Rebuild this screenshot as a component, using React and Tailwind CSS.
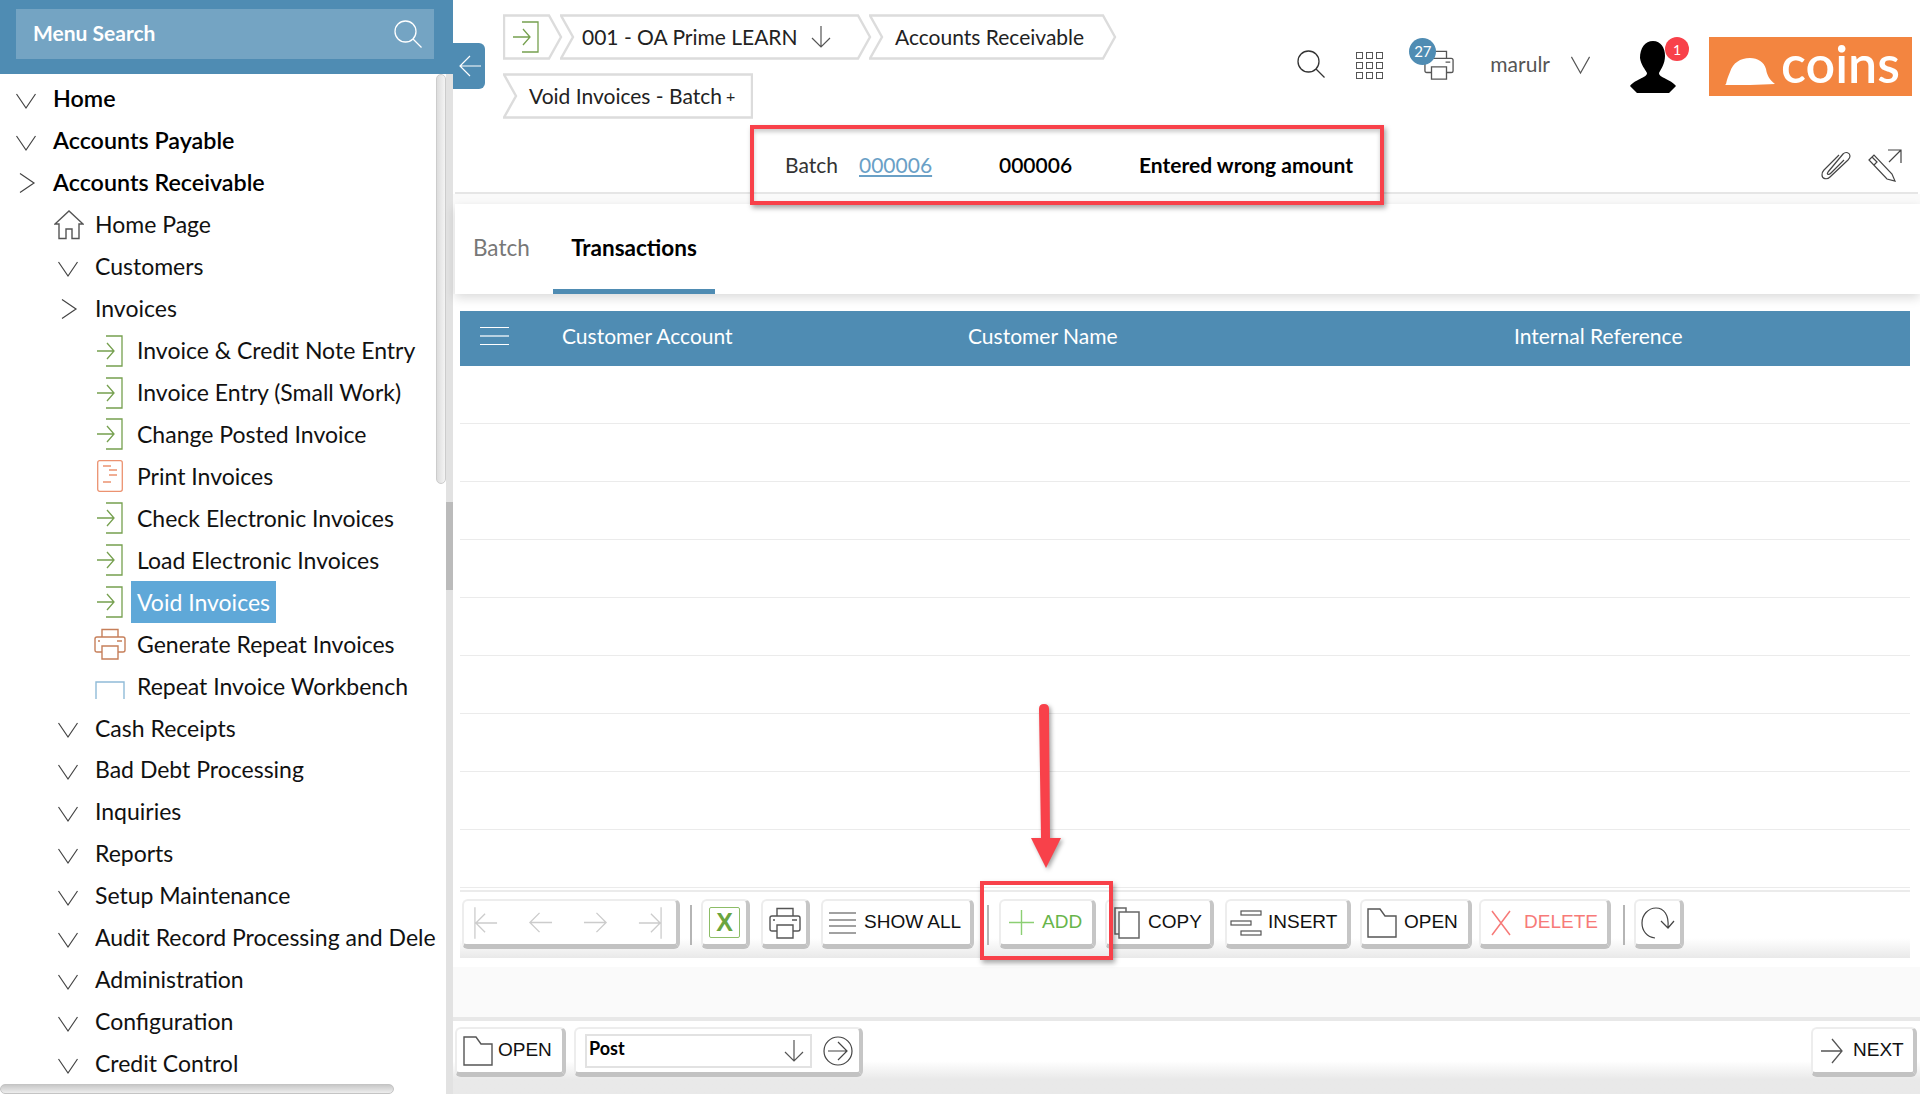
const Chevron = ({ open = true, className = "" }) => (
  <svg viewBox="0 0 22 22" className={`w-[22px] h-[22px] shrink-0 ${className}`} fill="none" stroke="#444" strokeWidth="1.2">
    {open ? <path d="M1.5 6 L11 20 L20.5 6" /> : <path d="M5 1.5 L19 11 L5 20.5" />}
  </svg>
);

const EnterIcon = ({ className = "" }) => (
  <svg viewBox="0 0 28 32" className={`w-[28px] h-[32px] shrink-0 ${className}`} fill="none" stroke="#76a04f" strokeWidth="1.3">
    <path d="M10 1 H26 V31 H10" />
    <path d="M1 16 H18 M11 8 L18 16 L11 24" />
  </svg>
);

const SearchIcon = ({ color = "#333", className = "" }) => (
  <svg viewBox="0 0 28 28" className={className} fill="none" stroke={color} strokeWidth="1.3">
    <circle cx="11.5" cy="11.5" r="10.5" />
    <path d="M19 19 L27.5 27.5" />
  </svg>
);

const PrinterIcon = ({ color = "#444", className = "" }) => (
  <svg viewBox="0 0 32 32" className={className} fill="none" stroke={color} strokeWidth="1.4">
    <path d="M8 9 V1.5 H24 V9" />
    <path d="M8 24 H3 Q1 24 1 22 V11 Q1 9 3 9 H29 Q31 9 31 11 V22 Q31 24 29 24 H24" />
    <path d="M8 18 H24 V31 H8 Z" />
    <path d="M4 13 H6 M23 13 H28" />
  </svg>
);

const FolderIcon = () => (
  <svg viewBox="0 0 30 30" className="w-[30px] h-[30px] shrink-0" fill="none" stroke="#555" strokeWidth="1.4">
    <path d="M1 1 H13 L18 8 H29 V29 H1 Z" />
  </svg>
);

const sideItems = [
  { label: "Home", level: 0, open: true },
  { label: "Accounts Payable", level: 0, open: true },
  { label: "Accounts Receivable", level: 0, open: false },
  { label: "Home Page", level: 1, icon: "house" },
  { label: "Customers", level: 1, open: true },
  { label: "Invoices", level: 1, open: false },
  { label: "Invoice & Credit Note Entry", level: 2, icon: "enter" },
  { label: "Invoice Entry (Small Work)", level: 2, icon: "enter" },
  { label: "Change Posted Invoice", level: 2, icon: "enter" },
  { label: "Print Invoices", level: 2, icon: "doc" },
  { label: "Check Electronic Invoices", level: 2, icon: "enter" },
  { label: "Load Electronic Invoices", level: 2, icon: "enter" },
  { label: "Void Invoices", level: 2, icon: "enter", active: true },
  { label: "Generate Repeat Invoices", level: 2, icon: "print" },
  { label: "Repeat Invoice Workbench", level: 2, icon: "window" },
  { label: "Cash Receipts", level: 1, open: true },
  { label: "Bad Debt Processing", level: 1, open: true },
  { label: "Inquiries", level: 1, open: true },
  { label: "Reports", level: 1, open: true },
  { label: "Setup Maintenance", level: 1, open: true },
  { label: "Audit Record Processing and Dele", level: 1, open: true },
  { label: "Administration", level: 1, open: true },
  { label: "Configuration", level: 1, open: true },
  { label: "Credit Control", level: 1, open: true },
];

const SideIcon = ({ item }) => {
  if (item.icon === "house")
    return (
      <svg viewBox="0 0 30 30" className="w-[30px] h-[30px] shrink-0" fill="none" stroke="#555" strokeWidth="1.4">
        <path d="M1 14 L15 1 L29 14 H25 V28.5 H18 V19 H12 V28.5 H5 V14 Z" />
      </svg>
    );
  if (item.icon === "enter") return <EnterIcon />;
  if (item.icon === "doc")
    return (
      <svg viewBox="0 0 26 32" className="w-[26px] h-[32px] shrink-0" fill="none" stroke="#ec9270" strokeWidth="1.3">
        <rect x="0.7" y="0.7" width="24.6" height="30.6" rx="2" />
        <path d="M6 6 H14 M12 10 H20 M12 15 H20 M6 22 H14" />
      </svg>
    );
  if (item.icon === "print") return <PrinterIcon color="#c67f5a" className="w-[32px] h-[32px] shrink-0" />;
  return (
    <svg viewBox="0 0 30 18" className="w-[30px] h-[18px] shrink-0 mt-[8px]" fill="none" stroke="#90bbd8" strokeWidth="1.4">
      <path d="M1 18 V1 H29 V18" />
    </svg>
  );
};

const SideRow = ({ item }) => {
  if (item.level === 0)
    return (
      <div className="h-[41.95px] pl-[15px] flex items-center gap-[16px] text-black text-[23.3px] font-semibold whitespace-nowrap">
        <Chevron open={item.open} />
        <span>{item.label}</span>
      </div>
    );
  if (item.level === 1)
    return (
      <div className="h-[41.95px] pl-[53px] flex items-center whitespace-nowrap text-[#111]">
        <div className="w-[42px] shrink-0 flex pl-[4px]">
          {item.icon ? <div className="-ml-[3px]"><SideIcon item={item} /></div> : <Chevron open={item.open} />}
        </div>
        <span>{item.label}</span>
      </div>
    );
  return (
    <div className="h-[41.95px] pl-[94px] flex items-center whitespace-nowrap text-[#111]">
      <div className="w-[37px] shrink-0 flex justify-center pr-[5px]">
        <SideIcon item={item} />
      </div>
      <span className={item.active ? "bg-[#5fa8d8] text-white h-[42px] px-[6px] flex items-center" : "px-[6px]"}>
        {item.label}
      </span>
    </div>
  );
};

const Sidebar = () => (
  <aside className="w-[453px] shrink-0 h-full flex flex-col relative">
    <div className="h-[74px] bg-[#4f8cb3] pt-[9px] pl-[16px] pr-[19px] shrink-0">
      <div className="h-[50px] bg-[#74a4c3] flex items-center justify-between pl-[17px] pr-[12px] text-white font-bold text-[21px]">
        <span className="pb-[2px]">Menu Search</span>
        <SearchIcon color="#fff" className="w-[28px] h-[28px]" />
      </div>
    </div>
    <div className="flex-1 flex min-h-0">
      <div className="w-[436px] pt-[4px] overflow-hidden text-[23px] leading-none">
        {sideItems.map((item) => (
          <SideRow key={item.label} item={item} />
        ))}
      </div>
      <div className="w-[10px] pb-[610px]">
        <div className="h-full rounded-full border border-[#ccc] bg-gradient-to-r from-[#ddd] to-[#f4f4f4]"></div>
      </div>
      <div className="w-[7px] bg-[#e2e2e2] pt-[428px]">
        <div className="h-[88px] bg-[#bbb]"></div>
      </div>
    </div>
    <div className="absolute left-0 bottom-0 w-[394px] h-[10px] rounded-full border border-[#c4c4c4] bg-gradient-to-b from-[#c8c8c8] to-[#eee]"></div>
    <div className="absolute left-[453px] top-[43px] w-[32px] h-[46px] bg-[#4f8cb3] rounded-r-md flex items-center pl-[6px] z-10">
      <svg viewBox="0 0 22 22" className="w-[22px] h-[22px]" fill="none" stroke="#fff" strokeWidth="1.2">
        <path d="M22 11 H1 M11 1 L1 11 L11 21" />
      </svg>
    </div>
  </aside>
);

const Crumb = ({ width, first, last, className = "", children }) => (
  <div className={`relative h-[46px] flex items-center ${className}`} style={{ width }}>
    <svg className="absolute inset-0 w-full h-full" viewBox={`0 0 ${width} 46`} fill="none" stroke="#dcdcdc" strokeWidth="2.4">
      <path
        d={
          `M1 1.5 ` +
          (last ? `H${width - 1} V44.5 H1 ` : `H${width - 14} L${width - 2} 23 L${width - 14} 44.5 H1 `) +
          (first ? "Z" : "L13 23 Z")
        }
      />
    </svg>
    <div className="relative flex items-center whitespace-nowrap">{children}</div>
  </div>
);

const TopBar = () => (
  <div className="h-[125px] flex shrink-0">
    <div className="pl-[50px] pt-[14px] w-[700px] text-[21px] text-[#222]">
      <div className="flex">
        <Crumb width={60} first className="pl-[9px]">
          <EnterIcon />
        </Crumb>
        <Crumb width={312} className="-ml-[3px] pl-[22px]">
          <span>001 - OA Prime LEARN</span>
          <svg viewBox="0 0 20 22" className="w-[20px] h-[22px] ml-[13px]" fill="none" stroke="#555" strokeWidth="1.2">
            <path d="M10 0 V21 M1 12 L10 21 L19 12" />
          </svg>
        </Crumb>
        <Crumb width={248} className="-ml-[3px] pl-[26px]">
          Accounts Receivable
        </Crumb>
      </div>
      <Crumb width={250} last className="mt-[13px] pl-[26px]">
        Void Invoices - Batch
        <span className="text-[16px] ml-[4px]">+</span>
      </Crumb>
    </div>
    <div className="flex-1 relative pt-[37px] pr-[8px] flex justify-end">
      <div className="flex items-start">
        <SearchIcon className="w-[28px] h-[28px] mt-[13px]" />
        <div className="grid grid-cols-3 gap-[3px] ml-[31px] mt-[15px]">
          {[0, 1, 2, 3, 4, 5, 6, 7, 8].map((n) => (
            <div key={n} className="w-[7px] h-[7px] border border-[#555]"></div>
          ))}
        </div>
        <div className="relative ml-[41px] mt-[13px]">
          <PrinterIcon color="#555" className="w-[30px] h-[30px]" />
          <div className="absolute -left-[15px] -top-[12px] w-[27px] h-[27px] rounded-full bg-[#4f8cb3] text-white text-[15px] flex items-center justify-center">
            27
          </div>
        </div>
        <span className="ml-[36px] mt-[14px] text-[21px] text-[#555] leading-[26px]">marulr</span>
        <svg viewBox="0 0 22 22" className="w-[21px] h-[21px] ml-[20px] mt-[17px]" fill="none" stroke="#555" strokeWidth="1.2">
          <path d="M1.5 3 L11 20 L20.5 3" />
        </svg>
        <div className="relative ml-[39px] mt-[4px] w-[46px] h-[52px]">
          <svg viewBox="0 0 46 52" className="w-[46px] h-[52px]" fill="#000">
            <path d="M23 0 C31 0 35 7 35 15 C35 23 31 28 29 32 C29 37 41 38 46 45 L39 52 H7 L0 45 C5 38 17 37 17 32 C15 28 11 24 10 17 C10 7 15 0 23 0 Z" />
          </svg>
          <div className="absolute left-[35px] -top-[4px] w-[24px] h-[24px] rounded-full bg-[#f8414a] text-white text-[14px] flex items-center justify-center">
            1
          </div>
        </div>
        <div className="w-[203px] h-[59px] bg-[#f38540] ml-[33px] flex items-center pl-[16px] text-white">
          <svg viewBox="0 0 50 28" className="w-[50px] h-[28px] mt-[8px] shrink-0" fill="#fff">
            <path d="M1 27 C2 22 3 20 5 15 C8 6 15 1 25 1 C33 1 39 5 41 12 C42 18 44 22 50 27 C35 28 15 28 0 28 Z" />
          </svg>
          <span className="ml-[6px] pb-[7px] text-[52px] leading-none font-semibold">coins</span>
        </div>
      </div>
    </div>
  </div>
);

const InfoRow = () => (
  <div className="h-[69px] mx-[2px] border-b-[2px] border-[#e6e6e6] shrink-0 flex items-center pl-[330px] pr-[16px] pt-[13px] text-[21px] text-[#111]">
    <span className="w-[74px] text-[#333]">Batch</span>
    <a className="w-[140px] text-[#6aa0c6] underline">000006</a>
    <span className="w-[140px] font-semibold text-black">000006</span>
    <span className="font-bold text-black">Entered wrong amount</span>
    <div className="ml-auto flex items-center gap-[16px]">
      <svg viewBox="0 0 32 30" className="w-[32px] h-[30px]" fill="none" stroke="#444" strokeWidth="1.2">
        <path d="M8 22 L23 4 C26 1 30 3 30 6 C30 8 29 9 28 10 L10 27 C7 30 2 29 2 25 C2 23 3 21 4 20 L19 5 M8 22 C6 25 9 25 11 23 L24 10" />
      </svg>
      <svg viewBox="0 0 34 34" className="w-[34px] h-[34px]" fill="none" stroke="#444" strokeWidth="1.2">
        <path d="M20 2 H33 V15 M33 2 L21 14" />
        <path d="M1 12 L6 7 L24 26 L27 33 L19 31 Z M4 9 L9 14 L6 17" />
      </svg>
    </div>
  </div>
);

const Tabs = () => (
  <div className="relative z-[1] h-[90px] mt-[10px] ml-[2px] bg-white shadow-[0_4px_10px_rgba(0,0,0,0.14)] flex shrink-0 text-[22.5px]">
    <div className="w-[98px] pl-[18px] flex items-center pb-[3px] text-[#777]">Batch</div>
    <div className="w-[162px] border-b-[5px] border-[#4f8cb3] flex items-center justify-center pt-[2px] font-bold text-black">
      Transactions
    </div>
  </div>
);

const Table = () => (
  <div className="mt-[17px] mx-[7px] mr-[10px] shrink-0">
    <div className="h-[55px] bg-[#4f8cb3] flex items-center pb-[5px] text-white text-[21px] relative">
      <div className="w-[102px] pl-[20px]">
        <div className="w-[29px] h-[18px] border-y border-white flex items-center">
          <div className="w-full border-t-2 border-[#b9d2e2]"></div>
        </div>
      </div>
      <span className="w-[406px]">Customer Account</span>
      <span className="w-[546px]">Customer Name</span>
      <span>Internal Reference</span>
    </div>
    {[0, 1, 2, 3, 4, 5, 6, 7, 8].map((n) => (
      <div key={n} className="h-[58px] border-b border-[#ebebeb]"></div>
    ))}
  </div>
);

const Btn = ({ className = "", color = "text-[#111]", children }) => (
  <div
    className={`h-[50px] shrink-0 bg-white rounded-md border-2 border-[#ededed] border-r-[4px] border-r-[#c6c6c6] border-b-[5px] border-b-[#c2c2c2] flex items-center font-['Liberation_Sans',sans-serif] text-[19px] whitespace-nowrap ${color} ${className}`}
  >
    {children}
  </div>
);

const Divider = ({ className = "" }) => <div className={`w-[2px] h-[40px] bg-[#b5b5b5] shrink-0 ${className}`}></div>;

const Toolbar = () => (
  <div className="mx-[7px] mr-[10px] mt-[2px] shrink-0 border-t-[2px] border-[#ebebeb] pt-[7px] h-[68px] pl-[2px] flex items-start gap-[11px] bg-gradient-to-b from-white from-[70%] to-[#e9e9e9]">
    <Btn className="w-[218px] justify-between pl-[10px] pr-[14px]">
      <svg viewBox="0 0 26 36" className="w-[24px] h-[34px]" fill="none" stroke="#ccc" strokeWidth="1.4"><path d="M1 1 V35 M25 18 H2 M12 8 L2 18 L12 28" /></svg>
      <svg viewBox="0 0 26 26" className="w-[25px] h-[25px]" fill="none" stroke="#ccc" strokeWidth="1.4"><path d="M25 13 H2 M12 3 L2 13 L12 23" /></svg>
      <svg viewBox="0 0 26 26" className="w-[25px] h-[25px]" fill="none" stroke="#ccc" strokeWidth="1.4"><path d="M1 13 H24 M14 3 L24 13 L14 23" /></svg>
      <svg viewBox="0 0 26 36" className="w-[24px] h-[34px]" fill="none" stroke="#ccc" strokeWidth="1.4"><path d="M25 1 V35 M1 18 H24 M14 8 L24 18 L14 28" /></svg>
    </Btn>
    <Divider className="mt-[6px] -ml-[1px] mr-[-2px]" />
    <Btn className="w-[49px] justify-center">
      <div className="w-[31px] h-[31px] border border-[#8dbd67] rounded-[2px] flex items-center justify-center text-[#6aa53f] font-bold text-[25px]">X</div>
    </Btn>
    <Btn className="w-[49px] justify-center">
      <PrinterIcon color="#555" className="w-[32px] h-[32px]" />
    </Btn>
    <Btn className="w-[153px] pl-[6px] gap-[8px]">
      <svg viewBox="0 0 27 22" className="w-[27px] h-[22px]" fill="none" stroke="#444" strokeWidth="1.2"><path d="M0 1 H27 M0 8 H27 M0 14 H27 M0 21 H27" /></svg>
      SHOW ALL
    </Btn>
    <Divider className="mt-[6px] mr-[-1px] ml-[2px]" />
    <Btn className="w-[97px] pl-[8px] gap-[8px]" color="text-[#67b54a]">
      <svg viewBox="0 0 25 25" className="w-[25px] h-[25px]" fill="none" stroke="#8ccf73" strokeWidth="1.4"><path d="M12.5 0 V25 M0 12.5 H25" /></svg>
      ADD
    </Btn>
    <Btn className="w-[109px] -ml-[2px] pl-[7px] gap-[8px]">
      <svg viewBox="0 0 26 32" className="w-[26px] h-[32px]" fill="none" stroke="#666" strokeWidth="1.5">
        <path d="M5 27 H1 V1 H12 V5" />
        <path d="M5 5 H25 V31 H5 Z" />
      </svg>
      COPY
    </Btn>
    <Btn className="w-[126px] pl-[3px] gap-[6px]">
      <svg viewBox="0 0 32 26" className="w-[32px] h-[26px]" fill="none" stroke="#555" strokeWidth="1.2">
        <rect x="11" y="1" width="20" height="4" />
        <rect x="1" y="11" width="20" height="4" />
        <rect x="11" y="21" width="20" height="4" />
      </svg>
      INSERT
    </Btn>
    <Btn className="w-[112px] -ml-[2px] pl-[5px] gap-[7px]">
      <FolderIcon />
      OPEN
    </Btn>
    <Btn className="w-[132px] -ml-[4px] pl-[10px] gap-[13px]" color="text-[#f77a78]">
      <svg viewBox="0 0 20 26" className="w-[20px] h-[26px]" fill="none" stroke="#f77a78" strokeWidth="1.5"><path d="M1 1 L19 25 M19 1 L1 25" /></svg>
      DELETE
    </Btn>
    <Divider className="mt-[6px] mr-[-1px] ml-[1px]" />
    <Btn className="w-[50px] -ml-[1px] justify-center">
      <svg viewBox="0 0 34 32" className="w-[34px] h-[32px]" fill="none" stroke="#444" strokeWidth="1.2">
        <path d="M14 31 C6 30 1 24 1 16 C1 8 7 1 15 1 C23 1 28 8 27 20 M20 14 L27 21 L33 14" />
      </svg>
    </Btn>
  </div>
);

const Footer = () => (
  <div className="h-[77px] border-t-[4px] border-[#e8e8e8] shrink-0 mt-auto flex items-start justify-between pt-[6px] pl-[2px] pr-[3px] bg-gradient-to-b from-white from-[55%] to-[#e9e9e9] to-[80%] relative">
    <div className="flex gap-[8px]">
      <Btn className="w-[111px] pl-[6px] gap-[5px]">
        <FolderIcon />
        OPEN
      </Btn>
      <Btn className="w-[289px] pl-[9px] gap-[11px] h-[49px]">
        <div className="w-[227px] h-[34px] border-[2px] border-[#e2e2e2] flex items-center justify-between pl-[2px] font-['Lato',sans-serif] font-bold text-[18px] text-black pr-[6px]">
          <span className="pb-[5px]">Post</span>
          <svg viewBox="0 0 20 22" className="w-[20px] h-[22px]" fill="none" stroke="#555" strokeWidth="1.2">
            <path d="M10 0 V21 M1 12 L10 21 L19 12" />
          </svg>
        </div>
        <svg viewBox="0 0 30 30" className="w-[30px] h-[30px]" fill="none" stroke="#444" strokeWidth="1.2">
          <circle cx="15" cy="15" r="14" />
          <path d="M5 15 H24 M15 6 L24 15 L15 24" />
        </svg>
      </Btn>
    </div>
    <Btn className="w-[106px] pl-[8px] gap-[10px]">
      <svg viewBox="0 0 22 26" className="w-[22px] h-[26px]" fill="none" stroke="#555" strokeWidth="1.3">
        <path d="M0 13 H21 M11 1 L21 13 L11 25" />
      </svg>
      NEXT
    </Btn>
  </div>
);

export default function App() {
  return (
    <div className="relative w-[1920px] h-[1094px] overflow-hidden flex bg-white font-['Lato',sans-serif]">
      <Sidebar />
      <main className="flex-1 flex flex-col min-w-0 h-full bg-[#fafafa]">
        <div className="bg-white shrink-0">
          <TopBar />
          <InfoRow />
        </div>
        <Tabs />
        <div className="bg-white h-[673px] flex flex-col shrink-0">
          <Table />
          <Toolbar />
        </div>
        <Footer />
      </main>

      {/* annotations */}
      <div className="absolute left-[750px] top-[125px] w-[634px] h-[80px] z-[2] border-[4px] border-[#f8414a] shadow-[2px_3px_5px_rgba(0,0,0,0.35),inset_0_3px_4px_rgba(0,0,0,0.2)]"></div>
      <div className="absolute left-[980px] top-[881px] w-[133px] h-[79px] border-[4px] border-[#f8414a] shadow-[2px_3px_5px_rgba(0,0,0,0.35)]"></div>
      <svg viewBox="0 0 30 164" className="absolute left-[1031px] top-[704px] w-[30px] h-[164px] drop-shadow-[2px_2px_2px_rgba(0,0,0,0.35)]">
        <path d="M8 5 Q8 0 13 0 Q18 0 18 5 L19 134 H30 L15 164 L0 134 H10 Z" fill="#f8414a" />
      </svg>
    </div>
  );
}
